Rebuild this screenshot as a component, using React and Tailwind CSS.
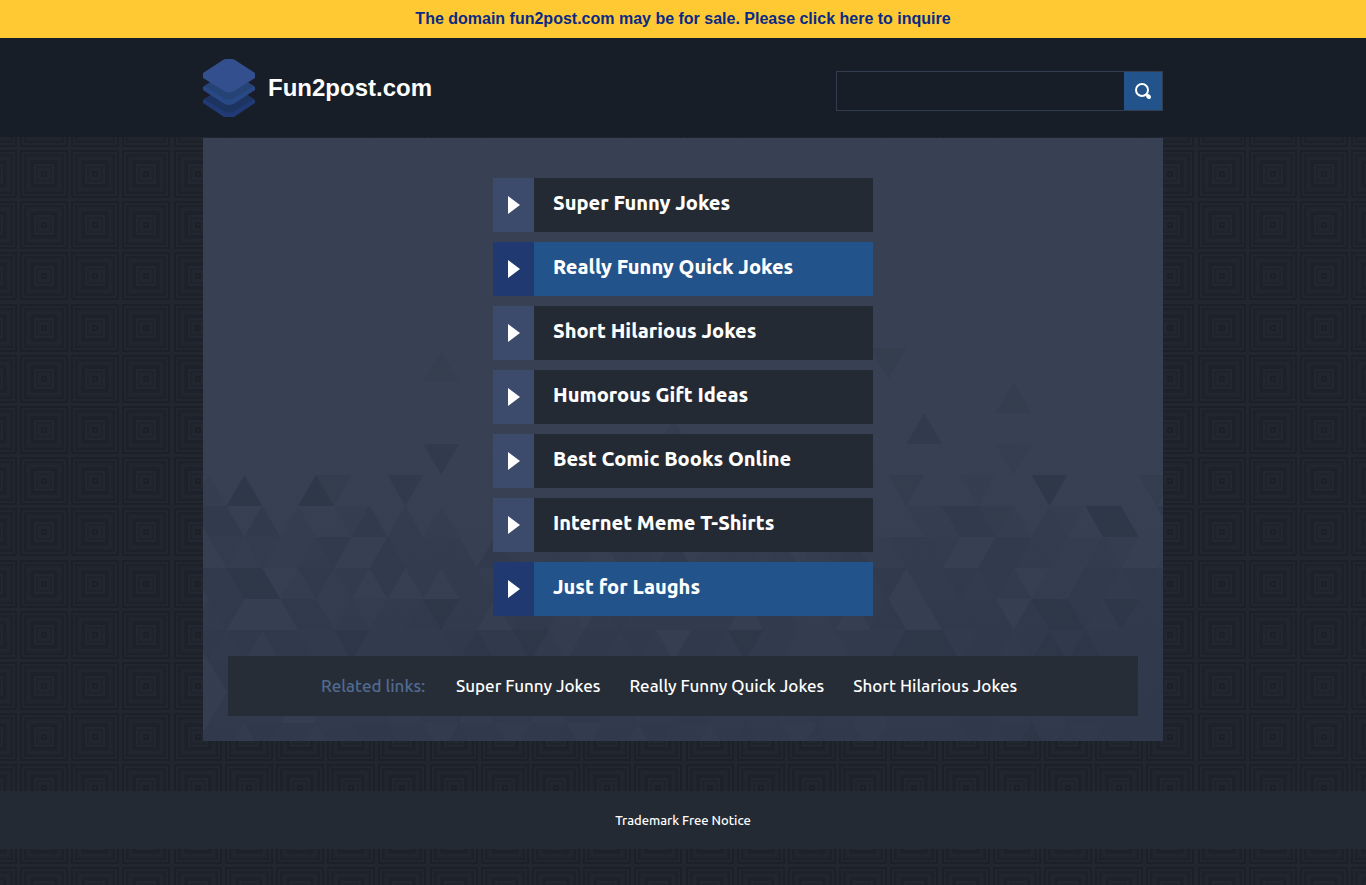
import { useId, useState } from "react";

const links = [
  { title: "Super Funny Jokes" },
  { title: "Really Funny Quick Jokes", active: true },
  { title: "Short Hilarious Jokes" },
  { title: "Humorous Gift Ideas" },
  { title: "Best Comic Books Online" },
  { title: "Internet Meme T-Shirts" },
  { title: "Just for Laughs", active: true },
];

const related = ["Super Funny Jokes", "Really Funny Quick Jokes", "Short Hilarious Jokes"];

// Square ring tiles for the page background
const tileStarts = [0, 51, 102, 154, 205];
const rings = [
  { r: 23, color: "#1c2029" },
  { r: 21, color: "#21262f" },
  { r: 19, color: "#1d222a" },
  { r: 17, color: "#1f242d" },
  { r: 15, color: "#21262f" },
  { r: 13, color: "#1e222b" },
  { r: 11, color: "#1d2129" },
  { r: 9, color: "#222731" },
  { r: 7, color: "#1e232c" },
  { r: 5, color: "#21262f" },
  { r: 2, color: "#1c2028" },
];

function PageBackground() {
  const id = useId();
  return (
    <svg className="absolute inset-0 h-full w-full" aria-hidden="true">
      <defs>
        <pattern id={id} x="18" y="148" width="256" height="256" patternUnits="userSpaceOnUse">
          <rect width="256" height="256" fill="#21262f" />
          {tileStarts.map(x =>
            tileStarts.map(y =>
              rings.map(ring => (
                <rect
                  key={`${x}-${y}-${ring.r}`}
                  x={x + 26 - ring.r}
                  y={y + 26 - ring.r}
                  width={ring.r * 2}
                  height={ring.r * 2}
                  fill="none"
                  stroke={ring.color}
                  strokeWidth="2"
                />
              ))
            )
          )}
        </pattern>
      </defs>
      <rect width="100%" height="100%" fill={`url(#${id})`} />
    </svg>
  );
}

// One string per row of triangles, one digit per triangle (0 = clear, 4 = darkest)
const triangleRows = [
  "1040004200" + "0300000000" + "0000000000" + "0000000002" + "0001000400" + "00020",
  "3303010013" + "0201000100" + "0000000000" + "0000000000" + "1133210210" + "44003",
  "0212112300" + "3222203212" + "2102213012" + "2120123112" + "2200332211" + "21001",
  "3344013120" + "3020221213" + "2120122013" + "2012031230" + "2232320113" + "32332",
  "2300033121" + "2234220232" + "1023222222" + "0221120230" + "0333303443" + "24333",
  "3231332242" + "2222343342" + "1332320332" + "4221112224" + "4423323434" + "33333",
  "0322222222" + "2222222222" + "2322232223" + "2222322232" + "3322333233" + "33333",
  "0222201222" + "2122312221" + "2322122322" + "2212322122" + "2233223233" + "33333",
  "2213221223" + "3221322122" + "3122132212" + "3221322122" + "2223234232" + "33333",
];

const looseTriangles = [
  { col: 13, y: 213, up: true, level: 1 },
  { col: 13, y: 306, up: false, level: 3 },
  { col: 26, y: 282, up: true, level: 2 },
  { col: 38, y: 210, up: false, level: 2 },
  { col: 40, y: 275, up: true, level: 3 },
  { col: 45, y: 244, up: true, level: 2 },
  { col: 45, y: 306, up: false, level: 1 },
];

const opacity = [0, 0.12, 0.23, 0.34, 0.52];

function trianglePath(col, y, up) {
  const half = 17.89;
  const x = 5.6 + col * half;
  return up
    ? `M${x} ${y}L${x + half} ${y + 31}H${x - half}Z`
    : `M${x - half} ${y}H${x + half}L${x} ${y + 31}Z`;
}

function PanelBackground() {
  return (
    <svg
      viewBox="0 0 960 603"
      preserveAspectRatio="xMidYMax slice"
      className="absolute inset-0 h-full w-full"
      aria-hidden="true"
    >
      <g fill="#283242">
        {looseTriangles.map(t => (
          <path key={`${t.col}-${t.y}`} d={trianglePath(t.col, t.y, t.up)} opacity={opacity[t.level]} />
        ))}
        {triangleRows.map((row, r) =>
          row.split("").map((level, col) => (
            <path
              key={`${r}-${col}`}
              d={trianglePath(col, 337 + r * 31, col % 2 === r % 2)}
              opacity={opacity[level]}
            />
          ))
        )}
      </g>
    </svg>
  );
}

function Logo() {
  return (
    <svg width="52" height="58" viewBox="0 0 52 58" aria-hidden="true">
      <path d="M0 18h52v24H0z" fill="#1a1c2a" />
      <path d="M0 41L22 27h8l22 14v3L31 58H21L0 44z" fill="#213a75" />
      <path d="M1 40L22 27h8l21 13-18 11q-7 5-14 0z" fill="#1d3460" />
      <path d="M0 28L22 14h8l22 14v3L32 44q-6 4-12 0L0 31z" fill="#294986" />
      <path d="M1 27L22 14h8l21 13-18 11q-7 5-14 0z" fill="#264375" />
      <path d="M0 14L20 1q1-1 3-1h6q2 0 3 1l20 13v5L31 32q-5 3-10 0L0 19z" fill="#334f8e" />
    </svg>
  );
}

function SearchIcon() {
  return (
    <svg width="18" height="18" viewBox="0 0 18 18" fill="none" stroke="#fff" aria-hidden="true">
      <circle cx="8" cy="8" r="6" strokeWidth="2" />
      <path d="M12 12l1 1" strokeWidth="2" />
      <path d="M14 14l1 1" strokeWidth="4" strokeLinecap="round" />
    </svg>
  );
}

export default function App() {
  const [query, setQuery] = useState("");

  return (
    <div className="relative min-h-screen bg-[#1f242e] font-['Ubuntu','Noto_Sans',sans-serif] text-white">
      <PageBackground />

      <div className="relative">
        {/* Sale banner */}
        <div className="bg-[#ffc933] py-[7px] text-center font-['Liberation_Sans',Arial,sans-serif] text-base font-bold text-[#0a2a85]">
          <a href="#inquire">The domain fun2post.com may be for sale. Please click here to inquire</a>
        </div>

        {/* Header */}
        <header className="bg-[#171e27] pt-[21px] pb-5">
          <div className="mx-auto flex max-w-[960px] items-center justify-between">
            <div className="flex items-center gap-[13px]">
              <Logo />
              <h1 className="font-['Liberation_Sans',Arial,sans-serif] text-2xl font-bold">Fun2post.com</h1>
            </div>

            <form
              className="mt-1.5 flex h-10 w-[327px] border border-[#323e50]"
              onSubmit={e => e.preventDefault()}
            >
              <input
                type="text"
                aria-label="Search"
                value={query}
                onChange={e => setQuery(e.target.value)}
                className="min-w-0 flex-1 bg-transparent px-3 text-base outline-none"
              />
              <button type="submit" aria-label="Submit search" className="flex w-[38px] items-center justify-center bg-[#22538a]">
                <SearchIcon />
              </button>
            </form>
          </div>
        </header>

        {/* Links panel */}
        <main className="relative mx-auto mt-px max-w-[960px] bg-linear-to-b from-[#384153] from-50% to-[#353d50] px-[25px] pt-10 pb-[25px]">
          <PanelBackground />

          <ul className="relative mx-auto flex max-w-[380px] flex-col gap-2.5">
            {links.map(link => (
              <li key={link.title}>
                <a href="#results" className="flex h-[54px]">
                  <span
                    className={`flex w-[41px] items-center justify-center ${
                      link.active ? "bg-[#213971]" : "bg-[#3c4a6b]"
                    }`}
                  >
                    <svg width="12" height="20" viewBox="0 0 12 20" fill="#fff" aria-hidden="true">
                      <path d="M0 1L12 10L0 19z" />
                    </svg>
                  </span>
                  <span
                    className={`flex flex-1 items-center pb-1 pl-[19px] text-xl font-extrabold ${
                      link.active ? "bg-[#22538a]" : "bg-[#242a33]"
                    }`}
                  >
                    {link.title}
                  </span>
                </a>
              </li>
            ))}
          </ul>

          <nav className="relative mt-10 flex h-[60px] items-center bg-[#262d36] pl-[93px] text-[17px] font-medium">
            <span className="w-[135px] text-[#526a91]">Related links:</span>
            <div className="flex gap-[29px]">
              {related.map(title => (
                <a key={title} href="#related">{title}</a>
              ))}
            </div>
          </nav>
        </main>

        {/* Footer */}
        <footer className="mt-[50px] flex h-[58px] items-center justify-center bg-[#242a33] pt-0.5 text-[13px] font-medium">
          <a href="#trademark">Trademark Free Notice</a>
        </footer>
      </div>
    </div>
  );
}
